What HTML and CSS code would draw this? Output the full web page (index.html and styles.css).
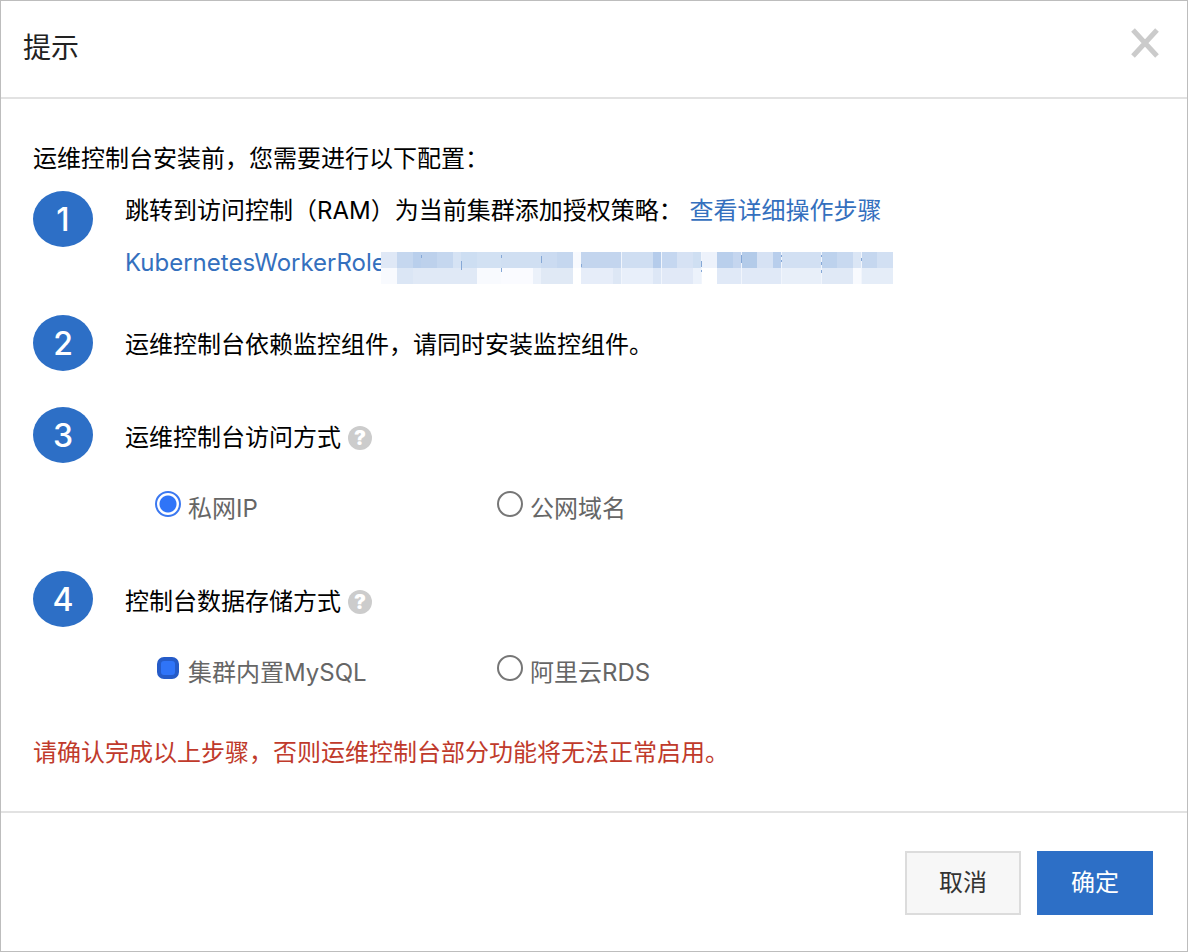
FILE: index.html
```html
<!DOCTYPE html>
<html lang="zh-CN">
<head>
  <meta charset="UTF-8" />
  <title>提示</title>
  <meta name="viewport" content="width=device-width, initial-scale=1.0" />
  <link rel="stylesheet" href="styles.css">
</head>
<body>

  <div class="dialog" role="dialog" aria-labelledby="dialogTitle">
    <header class="dialog-header">
      <h1 id="dialogTitle">提示</h1>
      <button type="button" class="close-btn" aria-label="关闭">
        <svg width="28" height="30" viewBox="0 0 28 30"><path d="M2 2L26 28M26 2L2 28" stroke="#cbcbcb" stroke-width="5" /></svg>
      </button>
    </header>

    <main class="dialog-body">
      <p class="intro">运维控制台安装前，您需要进行以下配置：</p>

      <section class="step step-policy">
        <span class="step-num">1</span>
        <div class="step-content">
          <p>跳转到访问控制（RAM）为当前集群添加授权策略： <a href="#">查看详细操作步骤</a></p>
          <p class="role-row">
            <a href="#">KubernetesWorkerRole</a>
            <!-- masked role id -->
            <svg class="mask" width="512" height="32" viewBox="0 0 512 32" shape-rendering="crispEdges" aria-hidden="true">
              <rect x="0" width="16" height="16" fill="#dfe8f6" />
              <rect x="16" width="16" height="16" fill="#c5d7ef" />
              <rect x="32" width="8" height="16" fill="#b9cfec" />
              <rect x="40" width="16" height="16" fill="#bdd1ec" />
              <rect x="56" width="16" height="16" fill="#c5d7ef" />
              <rect x="72" width="8" height="16" fill="#d6e3f4" />
              <rect x="80" width="16" height="16" fill="#cddef2" />
              <rect x="96" width="24" height="16" fill="#d2e1f3" />
              <rect x="120" width="40" height="16" fill="#d0dff2" />
              <rect x="160" width="16" height="16" fill="#cbdbf1" />
              <rect x="176" width="16" height="16" fill="#c5d7ef" />
              <rect x="192" width="8" height="16" fill="#f8fafe" />
              <rect x="200" width="40" height="16" fill="#c3d5ee" />
              <rect x="240" width="32" height="16" fill="#cfdef2" />
              <rect x="272" width="8" height="16" fill="#b5cceb" />
              <rect x="280" width="16" height="16" fill="#c5d7f0" />
              <rect x="296" width="16" height="16" fill="#d6e2f4" />
              <rect x="312" width="8" height="16" fill="#cfdff2" />
              <rect x="320" width="16" height="16" fill="#edf2fb" />
              <rect x="336" width="16" height="16" fill="#b9cfec" />
              <rect x="352" width="8" height="16" fill="#c5d6ef" />
              <rect x="360" width="16" height="16" fill="#b3cbe9" />
              <rect x="376" width="16" height="16" fill="#d6e2f4" />
              <rect x="392" width="8" height="16" fill="#b8ceec" />
              <rect x="400" width="40" height="16" fill="#d2e0f3" />
              <rect x="440" width="16" height="16" fill="#bdd2ed" />
              <rect x="456" width="16" height="16" fill="#c8d9f0" />
              <rect x="472" width="8" height="16" fill="#dbe6f5" />
              <rect x="480" width="16" height="16" fill="#c5d7ef" />
              <rect x="496" width="16" height="16" fill="#d2e0f3" />

              <rect x="0" y="16" width="16" height="16" fill="#f8fafe" />
              <rect x="16" y="16" width="16" height="16" fill="#dbe6f5" />
              <rect x="32" y="16" width="64" height="16" fill="#e0e9f6" />
              <rect x="96" y="16" width="24" height="16" fill="#f8fafe" />
              <rect x="120" y="16" width="32" height="16" fill="#fafbff" />
              <rect x="152" y="16" width="8" height="16" fill="#ebf1fa" />
              <rect x="160" y="16" width="32" height="16" fill="#e0e9f5" />
              <rect x="200" y="16" width="32" height="16" fill="#e6edf9" />
              <rect x="232" y="16" width="8" height="16" fill="#dde7f5" />
              <rect x="240" y="16" width="32" height="16" fill="#e8effa" />
              <rect x="272" y="16" width="8" height="16" fill="#dde7f6" />
              <rect x="280" y="16" width="32" height="16" fill="#e1e9f7" />
              <rect x="312" y="16" width="8" height="16" fill="#ecf2fb" />
              <rect x="336" y="16" width="64" height="16" fill="#e0e9f7" />
              <rect x="400" y="16" width="40" height="16" fill="#e8eff9" />
              <rect x="440" y="16" width="32" height="16" fill="#e0e9f6" />
              <rect x="472" y="16" width="8" height="16" fill="#f8fafe" />
              <rect x="480" y="16" width="32" height="16" fill="#e5edf8" />

              <path d="M240.5 0V32M280.5 0V32M320.5 0V32M360.5 0V32M400.5 0V32M440.5 0V32M480.5 0V32" stroke="#f1f5fc" />
              <path d="M40.5 3V6M80.5 9V18M120.5 3V6M120.5 16V20M160.5 4V11M200.5 12V15M320.5 9V15M320.5 18V20M360.5 3V11M400.5 3V5M400.5 8V10M440.5 3V5M440.5 10V13M440.5 18V21M480.5 6V9" stroke="#86a8d6" />
            </svg>
          </p>
        </div>
      </section>

      <section class="step">
        <span class="step-num">2</span>
        <div class="step-content">
          <p>运维控制台依赖监控组件，请同时安装监控组件。</p>
        </div>
      </section>

      <section class="step">
        <span class="step-num">3</span>
        <div class="step-content">
          <p class="step-title"><span id="accessTitle">运维控制台访问方式</span> <button type="button" class="help">?</button></p>
          <div class="options" role="radiogroup" aria-labelledby="accessTitle">
            <label class="option"><input type="radio" name="access" checked /> 私网IP</label>
            <label class="option"><input type="radio" name="access" /> 公网域名</label>
          </div>
        </div>
      </section>

      <section class="step">
        <span class="step-num">4</span>
        <div class="step-content">
          <p class="step-title"><span id="storageTitle">控制台数据存储方式</span> <button type="button" class="help">?</button></p>
          <div class="options" role="radiogroup" aria-labelledby="storageTitle">
            <label class="option"><input type="radio" name="storage" class="square" checked /> 集群内置MySQL</label>
            <label class="option"><input type="radio" name="storage" /> 阿里云RDS</label>
          </div>
        </div>
      </section>

      <p class="warning">请确认完成以上步骤，否则运维控制台部分功能将无法正常启用。</p>
    </main>

    <footer class="dialog-footer">
      <button type="button" class="btn">取消</button>
      <button type="button" class="btn btn-primary">确定</button>
    </footer>
  </div>

</body>
</html>
```
FILE: styles.css
```css
* {
  box-sizing: border-box;
}

body {
  margin: 0;
  font-family: Inter, "Noto Sans CJK SC", sans-serif;
  font-size: 24px;
  line-height: 36px;
  color: #000;
  background: #fff;
}

p, h1 {
  margin: 0;
}

a {
  color: #3470be;
  text-decoration: none;
}

button {
  font-family: inherit;
  cursor: pointer;
}

.dialog {
  display: flex;
  flex-direction: column;
  min-height: 100vh;
  border: 1px solid #bdbdbd;
}

.dialog-header {
  display: flex;
  justify-content: space-between;
  align-items: flex-start;
  padding: 26px 28px 28px 22px;
  border-bottom: 2px solid #e2e2e2;
}

.dialog-header h1 {
  font-size: 28px;
  font-weight: 400;
  line-height: 42px;
  color: #222;
}

.close-btn {
  display: flex;
  padding: 0;
  margin-top: 1px;
  border: none;
  background: none;
}

.dialog-body {
  flex: 1;
  padding: 42px 32px 40px;
}

.step {
  display: flex;
  gap: 32px;
  margin-top: 32px;
  line-height: 60px;
}

.step-num {
  flex: none;
  width: 60px;
  height: 56px;
  border-radius: 50%;
  background: #2d6fc6;
  color: #fff;
  font-size: 32px;
  font-weight: 500;
  line-height: 58px;
  text-align: center;
}

.step-content {
  flex: 1;
}

.step-policy {
  margin-top: 8px;
  margin-bottom: 26px;
  line-height: 52px;
}

.step-policy + .step {
  margin-top: 0;
}

.step-policy .step-num {
  margin-top: 6px;
}

.role-row {
  display: flex;
  align-items: center;
}

/* the mask covers the end of the role name */
.mask {
  margin: 10px 0 0 -5px;
}

.step-title {
  display: flex;
  align-items: center;
  gap: 7px;
  line-height: 62px;
}

.help {
  width: 24px;
  height: 24px;
  padding: 0;
  border: none;
  border-radius: 50%;
  background: #ccc;
  color: #fff;
  font-size: 20px;
  font-weight: 900;
  line-height: 24px;
}

.options {
  display: flex;
  flex-wrap: wrap;
  padding: 13px 0 3px 30px;
}

.option {
  display: flex;
  align-items: center;
  gap: 7px;
  min-width: 342px;
  line-height: 54px;
  color: #666;
}

.option input {
  appearance: none;
  width: 26px;
  height: 26px;
  margin: 0 0 10px;
  border: 2px solid #767676;
  border-radius: 50%;
  background: #fff;
}

.option input:checked {
  border-color: #3b78f0;
  background: radial-gradient(circle, #2f74f8 8px, #fff 9px);
}

.option input.square:checked {
  width: 22px;
  height: 22px;
  margin: 0 2px 10px;
  border: 4px solid #255bc8;
  border-radius: 7px;
  background: #2f74f8;
}

.warning {
  margin-top: 32px;
  color: #c03a2b;
}

.dialog-footer {
  display: flex;
  justify-content: flex-end;
  gap: 16px;
  padding: 38px 34px 36px;
  border-top: 2px solid #e2e2e2;
}

.btn {
  min-width: 116px;
  height: 64px;
  padding-bottom: 6px;
  border: 2px solid #dcdcdc;
  background: #f7f7f7;
  color: #333;
  font-size: 24px;
}

.btn-primary {
  border-color: #2d6fc6;
  background: #2d6fc6;
  color: #fff;
}
```
